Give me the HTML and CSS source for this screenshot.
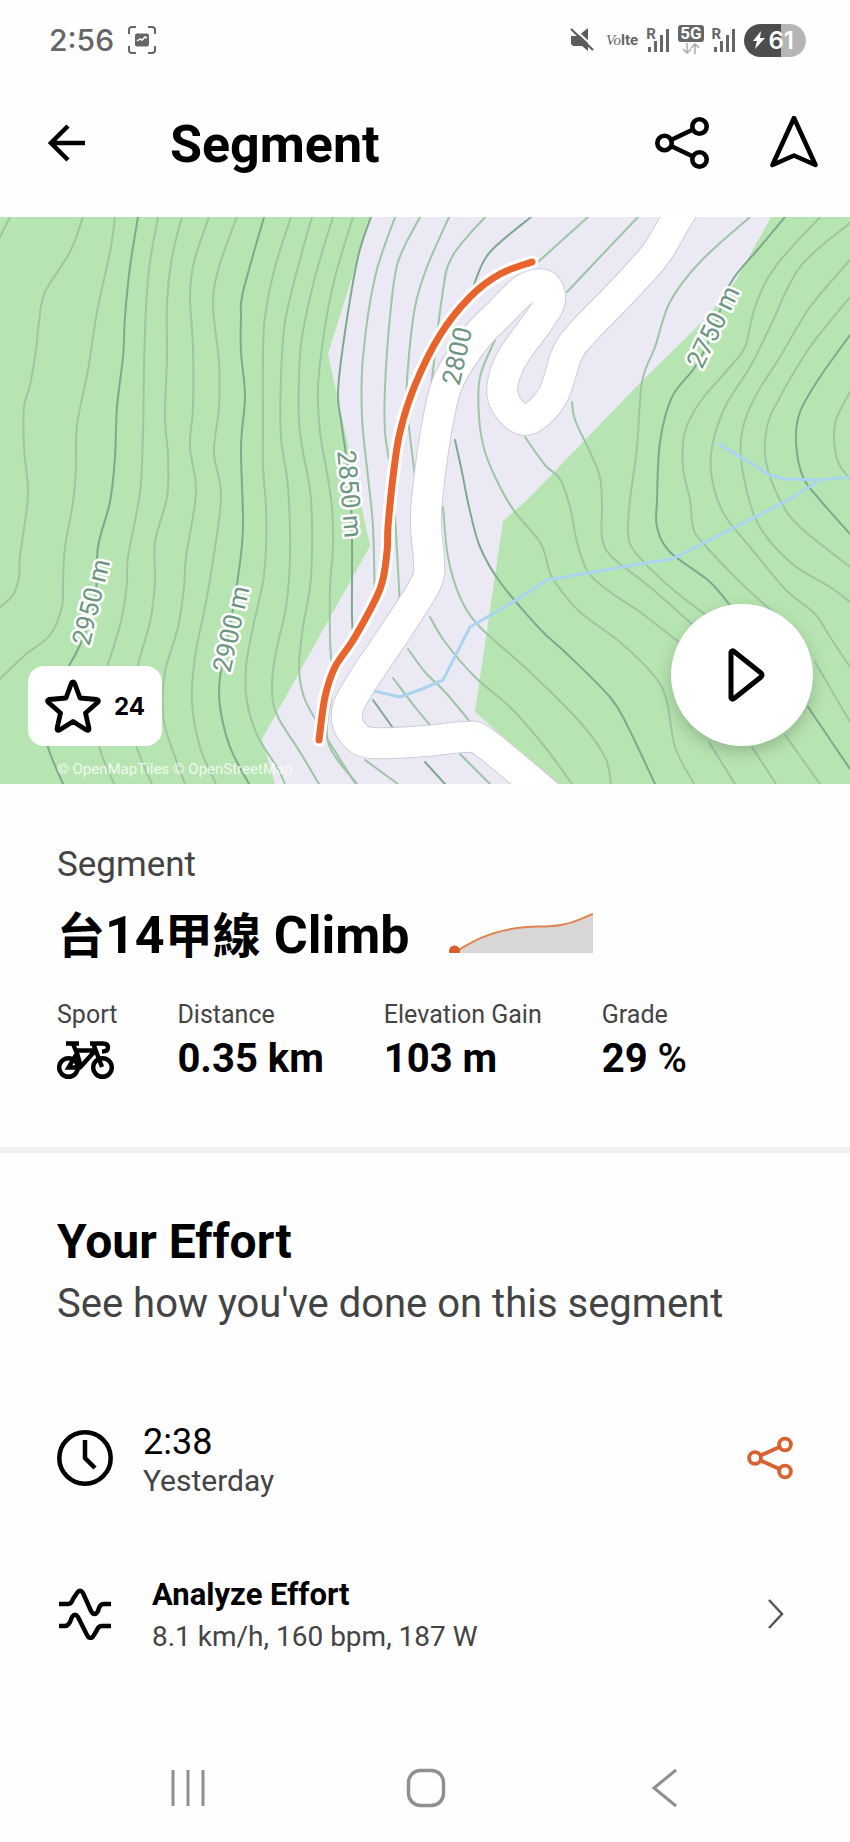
FILE: index.html
```html
<!DOCTYPE html>
<html lang="en">
<head>
    <meta charset="UTF-8">
    <meta name="viewport" content="width=device-width, initial-scale=1.0">
    <title>Segment</title>
    <link rel="stylesheet" href="styles.css">
</head>
<body>

    <div class="status-bar">
        <span class="status-time">2:56</span>
        <svg class="status-shot" width="28" height="28" viewBox="0 0 28 28" fill="none" stroke="#666" stroke-width="2">
            <path d="M1 8V4q0-3 3-3h4M20 1h4q3 0 3 3v4M27 20v4q0 3-3 3h-4M8 27H4q-3 0-3-3v-4"/>
            <rect x="7" y="7.500" width="14" height="13" rx="2" fill="#666" stroke="none"/>
            <path d="M9 15l3-2 2 1 3-3 2 1" stroke="#fefefe" stroke-width="1.500"/>
        </svg>
        <div class="status-icons">
            <svg width="24" height="24" viewBox="0 0 24 24">
                <path d="M1 8h7l10-8v23l-6-5H3l-2-2z" fill="#5c5c5c"/>
                <path d="M2 -1l23 21" stroke="#fefefe" stroke-width="2"/>
                <path d="M1 1l22 21" stroke="#5c5c5c" stroke-width="2.200"/>
            </svg>
            <span class="volte"><i>Vo</i><b>lte</b></span>
            <span class="signal">
                <b>R</b>
                <svg width="24" height="24" viewBox="0 0 24 24" fill="#666">
                    <path d="M2 19h3v5H2zM8 13h3v11H8zM14 7h3v17h-3zM20 1h3v23h-3z"/>
                </svg>
            </span>
            <span class="net">
                <b>5G</b>
                <svg width="18" height="12" viewBox="0 0 18 12" fill="none" stroke="#aaa" stroke-width="1.500">
                    <path d="M5 0v10M1 6l4 4 4-4M13 11V1M9 5l4-4 4 4"/>
                </svg>
            </span>
            <span class="signal">
                <b>R</b>
                <svg width="24" height="24" viewBox="0 0 24 24" fill="#666">
                    <path d="M2 19h3v5H2zM8 13h3v11H8zM14 7h3v17h-3zM20 1h3v23h-3z"/>
                </svg>
            </span>
            <span class="battery">
                <svg width="12" height="18" viewBox="0 0 12 18" fill="#fff"><path d="M8 0L0 10h4l-2 8L12 7H7z"/></svg>
                61
            </span>
        </div>
    </div>

    <header class="app-bar">
        <button class="icon-btn" aria-label="Back">
            <svg width="38" height="38" viewBox="0 0 38 38" fill="none" stroke="#000" stroke-width="4.500">
                <path d="M37 19H3M20 2L3 19l17 17"/>
            </svg>
        </button>
        <h1>Segment</h1>
        <button class="icon-btn" aria-label="Share">
            <svg width="56" height="54" viewBox="0 0 56 54" fill="none" stroke="#000" stroke-width="4.600">
                <circle cx="10.500" cy="27" r="7.200"/>
                <circle cx="45.500" cy="10.500" r="7.200"/>
                <circle cx="45.500" cy="43.500" r="7.200"/>
                <path d="M17 24l22-10.500M17 30l22 10.500"/>
            </svg>
        </button>
        <button class="icon-btn" aria-label="Navigate">
            <svg width="48" height="54" viewBox="0 0 48 54" fill="none" stroke="#000" stroke-width="4.600" stroke-linejoin="round">
                <path d="M24 2L45.500 49 24 39.500 2.500 49z"/>
            </svg>
        </button>
    </header>

    <div class="map">
        <svg class="map-canvas" viewBox="0 0 850 567" preserveAspectRatio="xMidYMid slice">
            <rect width="850" height="567" fill="#b7e5b1"/>
            <path d="M371 0L328 137 370 329 262 522 275 567H556L475 495 503 304 527 283 640 166 707 100 735 65 771 0z" fill="#ebe9f4"/>
            <g id="contours"></g>
            <g id="streams"></g>
            <g id="road"></g>
            <g class="heights">
                <text transform="translate(91 385) rotate(-76)" dy="9">2950 m</text>
                <text transform="translate(231 412) rotate(-77)" dy="9">2900 m</text>
                <text transform="translate(350 277) rotate(85)" dy="9">2850 m</text>
                <text transform="translate(457 139) rotate(-77)" dy="9">2800</text>
                <text transform="translate(713 110) rotate(-64)" dy="9">2750 m</text>
            </g>
            <g id="track"></g>
        </svg>
        <span class="map-credit">© OpenMapTiles © OpenStreetMap</span>
        <button class="star-btn" aria-label="Star segment">
            <svg width="56" height="54" viewBox="0 0 56 54" fill="none" stroke="#000" stroke-width="4.800" stroke-linejoin="round">
                <path d="M26.500 4q1.500-2 3 0L35 19l17 1.500q2.500 1 .5 3L40.500 34 44 49.500q0 2.500-2.500 1.500L28 42.500 14.500 51q-2.500 1-2.500-1.500L15.500 34 3.500 23.500q-2-2 .5-3L21 19z"/>
            </svg>
            24
        </button>
        <button class="play-btn" aria-label="Play">
            <svg width="40" height="54" viewBox="0 0 40 54" fill="none" stroke="#000" stroke-width="5" stroke-linejoin="round">
                <path d="M5 4q1-2 3-.5L35 25q2 2 0 4L8 50.500q-2 1.500-3-.5z"/>
            </svg>
        </button>
    </div>

    <section class="summary">
        <p class="kind">Segment</p>
        <div class="title-row">
            <h2><span class="han">台</span>14<span class="han">甲線</span> Climb</h2>
            <svg width="144" height="40" viewBox="0 0 144 40">
                <path d="M5 40C25 27 40 20 62 16S95 15 112 12 130 6 144 0V40z" fill="#d9d7d6"/>
                <path d="M5 40C25 27 40 20 62 16S95 15 112 12 130 6 144 1" fill="none" stroke="#e0844f" stroke-width="2"/>
                <circle cx="5.500" cy="38" r="5.500" fill="#dd5c2b"/>
            </svg>
        </div>
        <dl class="stats">
            <div>
                <dt>Sport</dt>
                <dd>
                    <svg class="bike" width="57" height="38" viewBox="0 0 57 38" fill="none" stroke="#000" stroke-width="4.400">
                        <circle cx="11.500" cy="26.500" r="9.300"/>
                        <circle cx="45.500" cy="26.500" r="9.300"/>
                        <path d="M9 2.500h13M16 3l5 12M18 9.500h19M20 12l-8.500 14.500H23L37 11M20 12l4 14M36 2l9 24M33 2.500h13q5 0 5 4t-6 4"/>
                    </svg>
                </dd>
            </div>
            <div>
                <dt>Distance</dt>
                <dd>0.35 km</dd>
            </div>
            <div>
                <dt>Elevation Gain</dt>
                <dd>103 m</dd>
            </div>
            <div>
                <dt>Grade</dt>
                <dd>29 <span class="unit">%</span></dd>
            </div>
        </dl>
    </section>

    <section class="effort">
        <h2>Your Effort</h2>
        <p class="effort-intro">See how you've done on this segment</p>

        <div class="effort-row">
            <svg width="56" height="56" viewBox="0 0 56 56" fill="none" stroke="#000" stroke-width="4.500">
                <circle cx="28" cy="28" r="25.700"/>
                <path d="M28 10v18l10 10"/>
            </svg>
            <div class="effort-text">
                <p class="time">2:38</p>
                <p class="day">Yesterday</p>
            </div>
            <button class="icon-btn" aria-label="Share effort">
                <svg width="46" height="44" viewBox="0 0 46 44" fill="none" stroke="#d9612f" stroke-width="3.800">
                    <circle cx="8" cy="22" r="5.900"/>
                    <circle cx="38" cy="8.500" r="5.900"/>
                    <circle cx="38" cy="35.500" r="5.900"/>
                    <path d="M13.500 19.500L32.500 11M13.500 24.500L32.500 33"/>
                </svg>
            </button>
        </div>

        <a class="effort-row analyze" href="#analyze">
            <svg width="56" height="52" viewBox="0 0 56 52" fill="none" stroke="#000" stroke-width="4.400" stroke-linejoin="round">
                <path d="M2 16h9c3 0 4-2 5-5l4-6c2-3 4-3 6 0l8 18c2 4 5 4 7 0l1-3c1-3 3-4 5-4h7"/>
                <path d="M2 38h6c3 0 4-2 5-4l2-5c2-3 4-3 6 0l9 18c2 4 5 4 7 0l3-5c1-3 3-4 5-4h9"/>
            </svg>
            <div class="effort-text">
                <p class="analyze-title">Analyze Effort</p>
                <p class="analyze-sub">8.1 km/h, 160 bpm, 187 W</p>
            </div>
            <svg class="chevron" width="18" height="32" viewBox="0 0 18 32" fill="none" stroke="#555" stroke-width="2.500">
                <path d="M2 2l13 14L2 30"/>
            </svg>
        </a>
    </section>

    <nav class="nav-bar">
        <button class="icon-btn" aria-label="Recent apps">
            <svg width="40" height="40" viewBox="0 0 40 40" stroke="#8f8f8f" stroke-width="3"><path d="M5 2v36M20 2v36M35 2v36"/></svg>
        </button>
        <button class="icon-btn" aria-label="Home">
            <svg width="40" height="40" viewBox="0 0 40 40" fill="none" stroke="#8f8f8f" stroke-width="3.400"><rect x="2.500" y="2.500" width="35" height="35" rx="12"/></svg>
        </button>
        <button class="icon-btn" aria-label="Go back">
            <svg width="40" height="40" viewBox="0 0 40 40" fill="none" stroke="#8f8f8f" stroke-width="3"><path d="M32 2L10 20l22 18"/></svg>
        </button>
    </nav>

    <script src="map.js"></script>
</body>
</html>
```

FILE: styles.css
```css
* {
    box-sizing: border-box;
}

body {
    margin: 0;
    font-family: Roboto, "Noto Sans CJK TC", sans-serif;
    background-color: #fefefe;
    color: #000;
}

h1, h2, p, dl, dd {
    margin: 0;
}

svg {
    display: block;
    flex-shrink: 0;
}

button {
    font-family: inherit;
    border: none;
    cursor: pointer;
}

.icon-btn {
    display: flex;
    padding: 0;
    background: none;
}

/* status bar */
.status-bar {
    display: flex;
    align-items: center;
    height: 68px;
    padding: 12px 44px 0 49px;
    color: #666;
}

.status-time {
    font-family: Inter, sans-serif;
    font-size: 30px;
    font-weight: 500;
}

.status-shot {
    margin-left: 14px;
}

.status-icons {
    display: flex;
    align-items: center;
    gap: 8px;
    margin-left: auto;
}

.volte {
    margin-left: 4px;
    font-size: 15px;
}

.volte i {
    font-family: "Liberation Serif", serif;
}

.signal {
    position: relative;
}

.signal b {
    position: absolute;
    left: 0;
    top: -2px;
    font-size: 15px;
    line-height: 16px;
}

.net {
    display: flex;
    flex-direction: column;
    align-items: center;
    gap: 1px;
}

.net b {
    padding: 0 2px;
    border-radius: 3px;
    background: #666;
    color: #fff;
    font-size: 17px;
    line-height: 17px;
}

.battery {
    display: flex;
    align-items: center;
    gap: 4px;
    height: 33px;
    padding: 0 12px 0 9px;
    border-radius: 17px;
    background: linear-gradient(to right, #4d4d4d 60%, #b5b5b5 60%);
    color: #fff;
    font-family: Inter, sans-serif;
    font-size: 24px;
    font-weight: 600;
}

/* app bar */
.app-bar {
    display: flex;
    align-items: center;
    height: 149px;
    padding: 0 32px 0 48px;
}

.app-bar h1 {
    flex: 1;
    margin-left: 84px;
    padding-top: 4px;
    font-size: 52px;
    line-height: 60px;
}

.app-bar .icon-btn + .icon-btn {
    margin-left: 60px;
}

/* map */
.map {
    position: relative;
    overflow: hidden;
}

.map-canvas {
    width: 100%;
    height: auto;
}

.line {
    fill: none;
    stroke-linecap: round;
    stroke-linejoin: round;
}

.contour {
    stroke: #9dc5a6;
    stroke-width: 2;
}

.contour-major {
    stroke: #7fa98e;
    stroke-width: 2;
}

.stream {
    stroke: #a9d6ee;
    stroke-width: 3;
}

.road-edge {
    stroke: #d0ccd6;
    stroke-width: 32;
}

.road-fill {
    stroke: #fff;
    stroke-width: 30;
}

.track-edge {
    stroke: #fff;
    stroke-width: 13;
}

.track-fill {
    stroke: #e8642c;
    stroke-width: 7;
}

.heights text {
    font-size: 26px;
    text-anchor: middle;
    fill: #6d9682;
    stroke: #fff;
    stroke-width: 5;
    stroke-linejoin: round;
    paint-order: stroke;
}

.map-credit {
    position: absolute;
    left: 57px;
    bottom: 6px;
    color: rgba(255, 255, 255, 0.8);
    font-size: 15px;
    line-height: 18px;
}

.star-btn {
    position: absolute;
    left: 28px;
    bottom: 38px;
    display: flex;
    align-items: center;
    gap: 13px;
    height: 80px;
    padding: 0 17px;
    border-radius: 16px;
    background: #fff;
    color: #000;
    font-family: Inter, sans-serif;
    font-size: 24px;
    font-weight: 700;
}

.play-btn {
    position: absolute;
    right: 37px;
    bottom: 38px;
    display: flex;
    align-items: center;
    justify-content: center;
    width: 142px;
    height: 142px;
    padding: 0 0 0 8px;
    border-radius: 50%;
    background: #fff;
    box-shadow: 0 6px 16px rgba(0, 0, 0, 0.2);
}

/* segment summary */
.summary {
    padding: 57px 57px 62px;
    border-bottom: 6px solid #f0f0f0;
}

.kind {
    color: #444;
    font-size: 35px;
    line-height: 48px;
}

.title-row {
    display: flex;
    align-items: center;
    gap: 40px;
    height: 88px;
}

.title-row h2 {
    padding-top: 6px;
    font-size: 52px;
    line-height: 64px;
    white-space: nowrap;
}

.han {
    font-size: 48px;
}

.stats {
    display: flex;
    gap: 60px;
    margin-top: 20px;
}

.stats dt {
    color: #444;
    font-size: 25px;
    line-height: 36px;
}

.stats dd {
    font-size: 40px;
    font-weight: 700;
    line-height: 52px;
}

.unit {
    font-weight: 500;
}

.bike {
    margin-top: 8px;
}

/* effort */
.effort {
    padding: 57px 57px 0;
}

.effort h2 {
    font-size: 48px;
    line-height: 64px;
}

.effort-intro {
    color: #444;
    font-size: 40px;
    line-height: 60px;
}

.effort-row {
    display: flex;
    align-items: center;
    height: 156px;
    color: inherit;
    text-decoration: none;
}

.effort-intro + .effort-row {
    margin-top: 46px;
}

.effort-text {
    flex: 1;
    margin-left: 30px;
    padding-top: 4px;
}

.analyze .effort-text {
    margin-left: 39px;
}

.time {
    font-size: 36px;
    line-height: 42px;
}

.day {
    color: #444;
    font-size: 30px;
    line-height: 36px;
}

.analyze-title {
    font-size: 31px;
    font-weight: 700;
    line-height: 42px;
}

.analyze-sub {
    color: #444;
    font-size: 28px;
    line-height: 42px;
}

.chevron {
    margin-right: 8px;
}

/* system navigation */
.nav-bar {
    display: flex;
    justify-content: space-between;
    margin-top: 76px;
    padding: 0 166px 34px 168px;
}
```

FILE: map.js
```javascript
// Points are flat x,y lists in map units (850 x 567)
const contours = [
    [11,-2, 0,20],
    [83,0, 70,35, 45,75, 39,105, 36,133, 30,168, 24,190, 24,230, 28,270, 27,290, 20,340, 19,360, 13,378, 0,390],
    [115,0, 110,35, 97,95, 88,153, 77,208, 76,250, 73,285, 65,330, 63,365, 62,390, 50,418, 25,438, 0,462],
    [158,0, 150,45, 146,90, 144,150, 143,215, 140,275, 128,340, 127,365, 122,400, 112,435, 98,480, 98,525, 114,567],
    [182,0, 172,40, 167,85, 167,140, 165,200, 168,240, 167,280, 155,325, 155,365, 150,405, 138,448, 132,490, 136,528, 152,567],
    [209,0, 194,45, 190,80, 193,130, 193,190, 190,230, 196,275, 186,340, 184,370, 178,410, 165,455, 163,495, 168,520, 185,567],
    [237,0, 219,50, 213,88, 219,145, 219,190, 214,235, 221,280, 212,350, 205,390, 195,440, 192,485, 200,530, 216,567],
    [291,0, 275,50, 265,100, 263,140, 263,210, 263,250, 266,290, 266,330, 263,365, 253,410, 246,450, 247,485, 258,520, 277,550, 285,567],
    [312,0, 298,50, 285,105, 281,160, 281,220, 288,270, 290,340, 286,390, 275,440, 272,475, 278,500, 300,535, 319,567],
    [333,0, 315,60, 302,120, 299,160, 299,205, 303,235, 311,283, 311,360, 303,410, 299,450, 304,480, 320,510, 355,566],
    [353,0, 335,60, 325,110, 318,170, 320,215, 326,250, 332,290, 333,330, 330,370, 330,420, 332,470, 328,525, 357,567],
    [395,0, 375,60, 363,140, 362,200, 368,260, 373,310, 375,390],
    [420,0, 398,45, 390,100, 385,170, 385,215, 390,250, 395,300, 400,390],
    [449,0, 427,50, 415,90, 408,150, 407,190, 415,260],
    [485,0, 452,40, 442,80, 430,180],
    [588,0, 538,45],
    [638,0, 600,40, 567,75],
    [495,123, 480,160, 479,200, 485,235, 500,270, 515,295, 540,325, 547,345, 553,362, 580,395, 620,425, 655,460, 667,485, 675,530, 694,567],
    [525,220, 545,248, 560,262, 570,290, 577,325, 588,355, 610,375, 640,395, 685,430],
    [572,185, 575,203, 590,235, 600,260, 602,290, 602,320, 612,340, 650,370, 695,410],
    [750,0, 700,45, 670,85, 655,130, 642,165, 637,230, 630,283, 628,315, 635,335, 670,370, 715,405],
    [820,0, 775,50, 755,90, 745,130, 730,150, 700,185, 685,215, 683,250, 690,283, 693,310, 702,325, 740,365, 775,397],
    [850,6, 800,50, 770,110, 750,150, 725,190, 712,230, 712,262, 724,297, 750,330, 785,372, 815,397, 830,420, 850,450],
    [850,43, 810,90, 780,140, 755,180, 742,215, 742,250, 757,305, 790,345, 830,370, 850,385],
    [850,80, 810,130, 780,180, 767,210, 766,245, 780,283, 800,310, 850,350],
    [850,175, 837,200, 834,220, 838,245, 850,262],
    [430,400, 445,425, 475,460, 510,490, 545,530, 572,567],
    [443,290, 448,340, 460,380, 480,410, 530,455, 580,505, 605,540, 611,567],
    [408,432, 425,455, 445,475, 472,507],
    [393,461, 415,490, 430,508],
    [460,537, 490,567],
    [365,543, 398,567],
    [815,445, 850,505],
    [785,518, 820,567],
    [752,530, 776,567],
    [709,525, 735,567]
];

const majorContours = [
    [138,0, 130,50, 125,100, 123,140, 117,190, 115,240, 110,285, 98,330, 95,385, 80,428, 60,465, 45,500, 48,530, 63,567],
    [264,0, 243,75, 241,100, 241,135, 245,180, 241,230, 243,310, 238,360, 228,420, 220,460, 220,490, 230,530, 249,567],
    [371,0, 358,40, 345,115, 338,175, 342,210, 350,270, 352,325, 352,400, 354,430],
    [531,0, 490,35, 475,65, 470,85],
    [455,223, 462,255, 469,290, 480,330, 500,365, 540,412, 565,435, 610,480, 628,510, 655,567],
    [785,0, 760,30, 730,67, 713,115, 695,150, 672,180, 660,225, 657,283, 657,310, 670,335, 710,365, 735,395],
    [850,118, 820,160, 800,195, 796,225, 803,260, 820,283, 850,317],
    [373,483, 393,511],
    [425,545, 445,567],
    [808,490, 850,552]
];

const streams = [
    [719,227, 770,258, 785,262, 820,263, 850,260],
    [820,263, 792,281, 765,295, 672,342, 640,347, 547,363, 513,385, 470,410, 443,463, 422,472, 400,480, 374,474]
];

const road = [690,-20, 676,3, 655,38, 620,77, 583,115, 567,137, 552,180, 525,203, 503,180, 510,145, 540,102, 550,83, 544,68, 525,72, 500,96, 475,122, 448,165, 436,215, 427,283, 426,310, 429,345, 426,366, 400,408, 360,468, 347,495, 353,516, 372,526, 425,524, 466,520, 485,526, 550,580];

const track = [532,45, 500,57, 470,80, 440,118, 415,168, 400,215, 393,260, 388,310, 387,335, 380,372, 355,420, 335,450, 325,480, 319,523];

function straightPath(p) {
    return "M" + p.join(" ");
}

// Catmull-Rom through every point, written as cubic curves
function smoothPath(p) {
    let d = "M" + p[0] + " " + p[1];
    const n = p.length / 2;
    const at = (i) => {
        const k = Math.max(0, Math.min(n - 1, i)) * 2;
        return [p[k], p[k + 1]];
    };
    for (let i = 0; i < n - 1; i++) {
        const [a, b, c, e] = [at(i - 1), at(i), at(i + 1), at(i + 2)];
        d += ` C${b[0] + (c[0] - a[0]) / 6} ${b[1] + (c[1] - a[1]) / 6}`;
        d += ` ${c[0] - (e[0] - b[0]) / 6} ${c[1] - (e[1] - b[1]) / 6} ${c[0]} ${c[1]}`;
    }
    return d;
}

function addLine(groupId, d, className) {
    const path = document.createElementNS("http://www.w3.org/2000/svg", "path");
    path.setAttribute("d", d);
    path.setAttribute("class", "line " + className);
    document.getElementById(groupId).appendChild(path);
}

contours.forEach(p => addLine("contours", smoothPath(p), "contour"));
majorContours.forEach(p => addLine("contours", smoothPath(p), "contour-major"));
streams.forEach(p => addLine("streams", straightPath(p), "stream"));

addLine("road", smoothPath(road), "road-edge");
addLine("road", smoothPath(road), "road-fill");
addLine("track", smoothPath(track), "track-edge");
addLine("track", smoothPath(track), "track-fill");
```
